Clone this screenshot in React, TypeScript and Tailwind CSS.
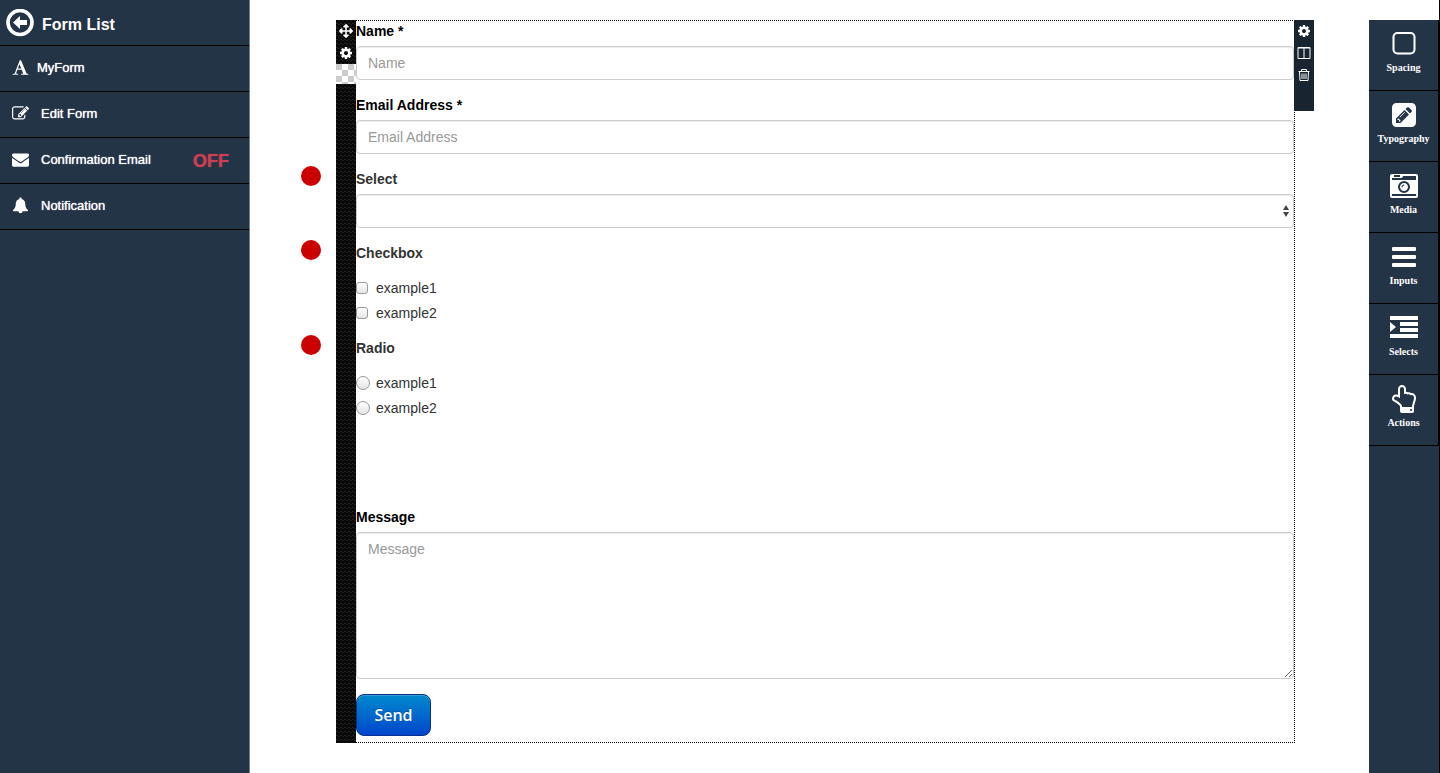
import type { ReactNode } from 'react';
import { FaArrowsAlt } from 'react-icons/fa';

type IconProps = { className?: string };

function BackIcon({ className }: IconProps) {
  return (
    <svg viewBox="0 0 28 28" className={className} aria-hidden="true">
      <circle cx="14" cy="13.500" r="12" fill="none" stroke="currentColor" strokeWidth="3.6" />
      <path d="M7 13.500l7-6.500v4h7v5h-7v4z" fill="currentColor" />
    </svg>
  );
}

function FontIcon({ className }: IconProps) {
  return (
    <svg viewBox="0 0 1792 1792" fill="currentColor" className={className} aria-hidden="true">
      <path d="M789 559l-170 450q33 0 136.500 2t160.500 2q19 0 57-2-87-253-184-452zm-725 1105l2-79q23-7 56-12.500t57-10.500 49.500-14.500 44.500-29 31-50.500l237-616 280-724h128q8 14 11 21l205 480q33 78 106 257.500t114 274.500q15 34 58 144.500t72 168.500q20 45 35 57 19 15 88 29.500t84 20.500q6 38 6 57 0 5-.5 13.500t-.5 12.500q-63 0-190-8t-191-8q-76 0-215 7t-178 8q0-43 4-78l131-28q1 0 12.500-2.500t15.500-3.500 14.500-4.500 15-6.500 11-8 9-11 2.500-14q0-16-31-96.500t-72-177.500-42-100l-450-2q-26 58-76.500 195.500t-50.500 162.500q0 22 14 37.500t43.500 24.500 48.500 13.500 57 8.500 41 4q1 19 1 58 0 9-2 27-58 0-174.500-10t-174.500-10q-8 0-26.500 4t-21.500 4q-80 14-188 14z" />
    </svg>
  );
}

function EditIcon({ className }: IconProps) {
  return (
    <svg viewBox="0 0 1792 1792" fill="currentColor" className={className} aria-hidden="true">
      <path d="M888 1184l116-116-152-152-116 116v56h96v96h56zm440-720q-16-16-33 1l-350 350q-17 17-1 33t33-1l350-350q17-17 1-33zm80 594v190q0 119-84.500 203.500t-203.500 84.500h-832q-119 0-203.500-84.500t-84.500-203.500v-832q0-119 84.500-203.500t203.500-84.500h832q63 0 117 25 15 7 18 23 3 17-9 29l-49 49q-14 14-32 8-23-6-45-6h-832q-66 0-113 47t-47 113v832q0 66 47 113t113 47h832q66 0 113-47t47-113v-126q0-13 9-22l64-64q15-15 35-7t20 29zm-96-738l288 288-672 672h-288v-288zm444 132l-92 92-288-288 92-92q28-28 68-28t68 28l152 152q28 28 28 68t-28 68z" />
    </svg>
  );
}

function EnvelopeIcon({ className }: IconProps) {
  return (
    <svg viewBox="0 0 1792 1792" fill="currentColor" className={className} aria-hidden="true">
      <path d="M1792 710v794q0 66-47 113t-113 47h-1472q-66 0-113-47t-47-113v-794q44 49 101 87 362 246 497 345 57 42 92.500 65.500t94.500 48 110 24.500h2q51 0 110-24.500t94.500-48 92.500-65.500q170-123 498-345 57-39 100-87zm0-294q0 79-49 151t-122 123q-376 261-468 325-10 7-42.500 31t-54 38.500-52 32.500-57.500 27-50 9h-2q-23 0-50-9t-57.500-27-52-32.500-54-38.500-42.500-31q-91-64-262-182.500t-205-142.500q-62-42-117-115.500t-55-136.500q0-78 41.500-130t118.500-52h1472q65 0 112.500 47t47.500 113z" />
    </svg>
  );
}

function BellIcon({ className }: IconProps) {
  return (
    <svg viewBox="0 0 18 18" fill="currentColor" className={className} aria-hidden="true">
      <path d="M9 .6a1.200 1.200 0 0 1 1.200 1.500C12.700 2.700 14 4.900 14 7.200c0 3.700 1.200 5.300 3 6.700 0 .7-.5 1.200-1.200 1.200H11.200a2.200 2.200 0 0 1-4.400 0H2.200C1.500 15.100 1 14.600 1 13.900c1.800-1.400 3-3 3-6.700 0-2.300 1.300-4.500 3.800-5.100A1.200 1.200 0 0 1 9 .6z" />
    </svg>
  );
}

function CogIcon({ className }: IconProps) {
  return (
    <svg viewBox="128 128 1536 1536" fill="currentColor" className={className} aria-hidden="true">
      <path d="M1152 896q0-106-75-181t-181-75-181 75-75 181 75 181 181 75 181-75 75-181zm512-109v222q0 12-8 23t-20 13l-185 28q-19 54-39 91 35 50 107 138 10 12 10 25t-9 23q-27 37-99 108t-94 71q-12 0-26-9l-138-108q-44 23-91 38-16 136-29 186-7 28-36 28h-222q-14 0-24.500-8.500t-11.500-21.500l-28-184q-49-16-90-37l-141 107q-10 9-25 9-14 0-25-11-126-114-165-168-7-10-7-23 0-12 8-23 15-21 51-66.500t54-70.500q-27-50-41-99l-183-27q-13-2-21-12.500t-8-23.500v-222q0-12 8-23t19-13l186-28q14-46 39-92-40-57-107-138-10-12-10-24 0-10 9-23 26-36 98.500-107.500t94.500-71.500q13 0 26 10l138 107q44-23 91-38 16-136 29-186 7-28 36-28h222q14 0 24.500 8.500t11.500 21.500l28 184q49 16 90 37l142-107q9-9 24-9 13 0 25 10 129 119 165 170 7 8 7 22 0 12-8 23-15 21-51 66.500t-54 70.500q26 50 41 98l183 28q13 2 21 12.500t8 23.500z" />
    </svg>
  );
}

function ColumnsIcon({ className }: IconProps) {
  return (
    <svg viewBox="0 0 14 14" fill="none" stroke="currentColor" className={className} aria-hidden="true">
      <path d="M1 1.500h12v11H1zM7 1.500v11M1 2h12" />
    </svg>
  );
}

function TrashIcon({ className }: IconProps) {
  return (
    <svg viewBox="0 0 14 14" fill="none" stroke="currentColor" className={className} aria-hidden="true">
      <path d="M1.500 3.500h11M4.500 3V1.500h5V3M2.500 4l.5 8.500h8l.5-8.500M5 5.500V11M7 5.500V11M9 5.500V11" />
    </svg>
  );
}

function SpacingIcon({ className }: IconProps) {
  return (
    <svg viewBox="0 0 28 28" fill="none" stroke="currentColor" strokeWidth="2" className={className} aria-hidden="true">
      <rect x="3.500" y="3" width="21" height="20.500" rx="4" />
    </svg>
  );
}

function PencilSquareIcon({ className }: IconProps) {
  return (
    <svg viewBox="-128 0 1792 1792" fill="currentColor" className={className} aria-hidden="true">
      <path d="M404 1108l152 152-52 52h-56v-96h-96v-56zm414-390q14 13-3 30l-291 291q-17 17-30 3-14-13 3-30l291-291q17-17 30-3zm-274 690l544-544-288-288-544 544v288h288zm608-608l92-92q28-28 28-68t-28-68l-152-152q-28-28-68-28t-68 28l-92 92zm384-384v960q0 119-84.500 203.500t-203.500 84.500h-960q-119 0-203.500-84.500t-84.500-203.500v-960q0-119 84.500-203.500t203.500-84.500h960q119 0 203.500 84.500t84.500 203.500z" />
    </svg>
  );
}

function CameraIcon({ className }: IconProps) {
  return (
    <svg viewBox="0 0 1792 1792" fill="currentColor" className={className} aria-hidden="true">
      <path d="M928 832q0-14-9-23t-23-9q-66 0-113 47t-47 113q0 14 9 23t23 9 23-9 9-23q0-40 28-68t68-28q14 0 23-9t9-23zm224 130q0 106-75 181t-181 75-181-75-75-181 75-181 181-75 181 75 75 181zm-1024 574h1536v-128h-1536v128zm1152-574q0-159-112.500-271.500t-271.500-112.500-271.500 112.500-112.500 271.500 112.500 271.500 271.500 112.500 271.500-112.500 112.500-271.500zm-1024-642h384v-128h-384v128zm-128 192h1536v-256h-828l-64 128h-644v128zm1664-256v1280q0 53-37.500 90.500t-90.500 37.500h-1536q-53 0-90.500-37.500t-37.500-90.500v-1280q0-53 37.500-90.500t90.500-37.500h1536q53 0 90.500 37.500t37.500 90.500z" />
    </svg>
  );
}

function BarsIcon({ className }: IconProps) {
  return (
    <svg viewBox="0 0 28 28" fill="currentColor" className={className} aria-hidden="true">
      <rect x="2" y="4" width="24" height="4" rx="1" />
      <rect x="2" y="12" width="24" height="4" rx="1" />
      <rect x="2" y="20" width="24" height="4" rx="1" />
    </svg>
  );
}

function IndentIcon({ className }: IconProps) {
  return (
    <svg viewBox="0 0 28 28" fill="currentColor" className={className} aria-hidden="true">
      <path d="M0 2h28v4H0zM10 8h18v4H10zM10 14h18v4H10zM0 20h28v4H0zM0 8l6 5-6 5z" />
    </svg>
  );
}

function HandIcon({ className }: IconProps) {
  return (
    <svg viewBox="0 0 1792 1792" fill="currentColor" className={className} aria-hidden="true">
      <path d="M1408 1600q0-26-19-45t-45-19-45 19-19 45 19 45 45 19 45-19 19-45zm128-764q0-189-167-189-26 0-56 5-16-30-52.500-47.500t-73.500-17.500-69 18q-50-53-119-53-25 0-55.500 10t-47.500 25v-331q0-52-38-90t-90-38q-51 0-89.500 39t-38.500 89v576q-20 0-48.500-15t-55-33-68-33-84.500-15q-67 0-97.500 44.500t-30.500 115.500q0 24 139 90 44 24 65 37 64 40 145 112 81 71 106 101 57 69 57 140v32h640v-32q0-72 32-167t64-193.500 32-179.500zm128-5q0 133-69 322-59 164-59 223v288q0 53-37.500 90.500t-90.500 37.500h-640q-53 0-90.500-37.500t-37.500-90.500v-288q0-10-4.500-21.500t-14-23.500-18-22.500-22.500-24-21.500-20.500-21.500-19-17-14q-74-65-129-100-21-13-62-33t-72-37-63-40.500-49.500-55-17.500-69.500q0-125 67-206.500t189-81.500q68 0 128 22v-374q0-104 77-180t179-76q105 0 181 75.500t76 180.500v169q62 4 119 37 21-3 43-3 101 0 178 60 139-1 219.500 85t80.500 227z" />
    </svg>
  );
}

const MENU = [
  { label: 'MyForm', Icon: FontIcon, gap: 'gap-2' },
  { label: 'Edit Form', Icon: EditIcon, gap: 'gap-3' },
  { label: 'Confirmation Email', Icon: EnvelopeIcon, gap: 'gap-3', status: 'OFF' },
  { label: 'Notification', Icon: BellIcon, gap: 'gap-3' },
];

const WIDGETS = [
  { label: 'Spacing', Icon: SpacingIcon },
  { label: 'Typography', Icon: PencilSquareIcon },
  { label: 'Media', Icon: CameraIcon },
  { label: 'Inputs', Icon: BarsIcon },
  { label: 'Selects', Icon: IndentIcon },
  { label: 'Actions', Icon: HandIcon },
];

const CONTROL =
  'block w-full rounded-[4px] border border-[#ccc] bg-white px-[11px] text-sm text-[#555] placeholder-[#999] shadow-[inset_0_1px_1px_rgba(0,0,0,0.075)] outline-none';

function Marker() {
  return <span className="absolute -top-[3px] -left-[55px] size-5 rounded-full bg-[#c00]" />;
}

function Field({ id, label, children }: { id: string; label: string; children: ReactNode }) {
  return (
    <div className="mb-[15px]">
      <label htmlFor={id} className="mb-[5px] block font-bold text-black">
        {label}
      </label>
      {children}
    </div>
  );
}

function ChoiceGroup({ legend, type }: { legend: string; type: 'checkbox' | 'radio' }) {
  const shape = type === 'radio' ? 'size-[14px] rounded-full' : 'size-3 rounded-[3px]';
  return (
    <fieldset className="mb-[15px]">
      <legend className="relative mb-[15px] font-bold">
        <Marker />
        {legend}
      </legend>
      <div className="flex flex-col items-start gap-[5px]">
        {['example1', 'example2'].map((option) => (
          <label key={option} className="flex items-center">
            <span className="flex w-5 items-center">
              <input
                type={type}
                name={legend}
                className={`${shape} appearance-none border border-[#999] bg-linear-to-b from-white to-[#e4e4e4]`}
              />
            </span>
            {option}
          </label>
        ))}
      </div>
    </fieldset>
  );
}

function Sidebar() {
  return (
    <nav className="w-[250px] shrink-0 border-r border-[#7a7f85] bg-[#243447] text-white">
      <a href="#forms" className="flex h-[46px] items-center gap-2 border-b border-black pl-[6px] text-base font-bold">
        <BackIcon className="size-7" />
        <span className="pt-1">Form List</span>
      </a>
      {MENU.map(({ label, Icon, gap, status }) => (
        <a
          key={label}
          href="#menu"
          className={`flex h-[46px] items-center border-b border-black pr-5 pl-3 text-[13px] [text-shadow:0_0_1px_#fff] ${gap}`}
        >
          <Icon className="mb-[3px] size-[17px]" />
          <span>{label}</span>
          {status && <span className="ml-auto text-lg font-bold text-[#c94053] [text-shadow:0_0_1px_#c94053]">{status}</span>}
        </a>
      ))}
    </nav>
  );
}

function WidgetBar() {
  return (
    <aside className="mt-5 w-[70px] shrink-0 bg-[#243447]">
      {WIDGETS.map(({ label, Icon }) => (
        <button
          key={label}
          type="button"
          className="flex h-[71px] w-full flex-col items-center gap-[3px] border-r border-b border-black pt-[10px] font-['Liberation_Serif',serif] text-[10px] leading-[14px] font-bold text-white"
        >
          <Icon className="size-7" />
          {label}
        </button>
      ))}
    </aside>
  );
}

export default function App() {
  return (
    <div className="flex min-h-screen border-r border-black bg-white font-['Liberation_Sans',Arial,sans-serif] text-sm text-[#333]">
      <Sidebar />

      <main className="flex min-w-0 flex-1 items-start pt-5 pr-[55px] pb-[30px] pl-[86px]">
        {/* row handle */}
        <div className="flex w-5 shrink-0 flex-col self-stretch bg-[#090909] bg-[linear-gradient(27deg,#222_25%,transparent_25%),linear-gradient(207deg,#1c1c1c_25%,transparent_25%)] bg-size-[4px_4px] text-white">
          <button type="button" aria-label="Move row" className="flex h-[22px] items-center justify-center">
            <FaArrowsAlt className="size-[14px]" />
          </button>
          <button type="button" aria-label="Row settings" className="flex h-[22px] items-center justify-center">
            <CogIcon className="size-3" />
          </button>
          <button
            type="button"
            aria-label="Row background"
            className="h-5 bg-[repeating-conic-gradient(#fff_0_25%,#ccc_0_50%)] bg-size-[12px_12px]"
          />
        </div>

        <form className="min-w-0 flex-1 border-t border-r border-b border-dotted border-black pb-[6px]">
          <Field id="name" label="Name *">
            <input id="name" type="text" placeholder="Name" className={`h-[34px] ${CONTROL}`} />
          </Field>
          <Field id="email" label="Email Address *">
            <input id="email" type="email" placeholder="Email Address" className={`h-[34px] ${CONTROL}`} />
          </Field>

          <div className="relative mb-[15px]">
            <Marker />
            <label htmlFor="select" className="mb-[5px] block font-bold">
              Select
            </label>
            <div className="relative">
              <select id="select" className={`h-[34px] appearance-none ${CONTROL}`} />
              <svg
                viewBox="0 0 6 12"
                fill="#444"
                className="pointer-events-none absolute top-[11px] right-[5px] h-3 w-[6px]"
                aria-hidden="true"
              >
                <path d="M3 0l3 5H0zM3 12l3-5H0z" />
              </svg>
            </div>
          </div>

          <ChoiceGroup legend="Checkbox" type="checkbox" />
          <ChoiceGroup legend="Radio" type="radio" />

          <div className="pt-[74px]">
            <Field id="message" label="Message">
              <textarea
                id="message"
                placeholder="Message"
                className={`h-[147px] resize-y py-[6px] leading-5 ${CONTROL}`}
              />
            </Field>
          </div>

          <button
            type="submit"
            className="block h-[42px] min-w-[75px] rounded-lg border border-[#0a2f86] bg-linear-to-b from-[#08c] to-[#04c] px-4 font-['Open_Sans',sans-serif] text-base font-semibold text-white shadow-[inset_0_1px_0_rgba(255,255,255,0.2)] [text-shadow:0_-1px_0_rgba(0,0,0,0.25)]"
          >
            Send
          </button>
        </form>

        {/* column tools */}
        <div className="-ml-px flex h-[91px] w-5 shrink-0 flex-col bg-[#18242f] text-white">
          <button type="button" aria-label="Settings" className="flex h-[22px] items-center justify-center">
            <CogIcon className="size-3" />
          </button>
          <button type="button" aria-label="Columns" className="flex h-[22px] items-center justify-center">
            <ColumnsIcon className="size-[14px]" />
          </button>
          <button type="button" aria-label="Delete" className="flex h-[22px] items-center justify-center">
            <TrashIcon className="size-[14px]" />
          </button>
        </div>
      </main>

      <WidgetBar />
    </div>
  );
}
